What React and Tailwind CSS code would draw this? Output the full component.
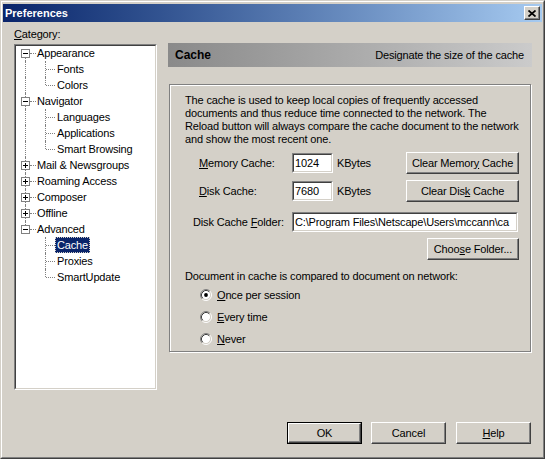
import React from "react";

const tree = [
  { label: "Appearance", open: true, children: ["Fonts", "Colors"] },
  { label: "Navigator", open: true, children: ["Languages", "Applications", "Smart Browsing"] },
  { label: "Mail & Newsgroups", open: false },
  { label: "Roaming Access", open: false },
  { label: "Composer", open: false },
  { label: "Offline", open: false },
  { label: "Advanced", open: true, children: ["Cache", "Proxies", "SmartUpdate"] },
];

function Btn({ children, className = "", def = false }) {
  const inner = (
    <div className="h-full w-full flex items-center justify-center border border-t-white border-l-white border-r-[#404040] border-b-[#404040] shadow-[inset_-1px_-1px_0_#808080]">
      {children}
    </div>
  );
  return def ? (
    <div className={"border border-black " + className}>{inner}</div>
  ) : (
    <div className={className}>{inner}</div>
  );
}

function Sunken({ className = "", innerClass = "", children }) {
  return (
    <div className={"border border-t-[#808080] border-l-[#808080] border-b-white border-r-white " + className}>
      <div className={"h-full w-full bg-white border border-t-[#404040] border-l-[#404040] border-b-[#d4d0c8] border-r-[#d4d0c8] " + innerClass}>
        {children}
      </div>
    </div>
  );
}

function Radio({ checked }) {
  return (
    <svg width="12" height="12" viewBox="0 0 12 12" className="shrink-0">
      <circle cx="6" cy="6" r="4.5" fill="white" />
      <path d="M2.11 9.89 A5.5 5.5 0 0 1 9.89 2.11" fill="none" stroke="#808080" strokeWidth="1" />
      <path d="M9.89 2.11 A5.5 5.5 0 0 1 2.11 9.89" fill="none" stroke="#ffffff" strokeWidth="1" />
      <path d="M2.82 9.18 A4.5 4.5 0 0 1 9.18 2.82" fill="none" stroke="#404040" strokeWidth="1" />
      <path d="M9.18 2.82 A4.5 4.5 0 0 1 2.82 9.18" fill="none" stroke="#d4d0c8" strokeWidth="1" />
      {checked && <circle cx="6" cy="6" r="1.9" fill="black" />}
    </svg>
  );
}

function ExpandBox({ open }) {
  return (
    <svg width="9" height="9" viewBox="0 0 9 9" className="absolute left-[5px] top-[4px]">
      <rect x="0.5" y="0.5" width="8" height="8" fill="white" stroke="#808080" />
      <line x1="2" y1="4.5" x2="7" y2="4.5" stroke="black" />
      {!open && <line x1="4.5" y1="2" x2="4.5" y2="7" stroke="black" />}
    </svg>
  );
}

function Tree() {
  const rows = [];
  tree.forEach((n, i) => {
    const first = i === 0;
    const last = i === tree.length - 1;
    rows.push({ type: 0, label: n.label, open: n.open, first, last });
    if (n.open)
      n.children.forEach((c, j) =>
        rows.push({ type: 1, label: c, parentLast: last, lastChild: j === n.children.length - 1 })
      );
  });
  const dot = "absolute border-dotted border-[#808080]";
  return (
    <div className="-mt-px">
      {rows.map((r, k) =>
        r.type === 0 ? (
          <div key={k} className="relative h-[16px] flex items-center pl-[21px] whitespace-nowrap">
            <span
              className={
                dot +
                " left-[9px] w-0 border-l " +
                (r.first ? "top-[8px] bottom-0" : r.last ? "top-0 h-[8px]" : "top-0 bottom-0")
              }
            />
            <span className={dot + " left-[14px] top-[8px] w-[6px] h-0 border-t"} />
            <ExpandBox open={r.open} />
            <span>{r.label}</span>
          </div>
        ) : (
          <div key={k} className="relative h-[16px] flex items-center pl-[39px] whitespace-nowrap">
            {!r.parentLast && <span className={dot + " left-[9px] top-0 bottom-0 w-0 border-l"} />}
            <span className={dot + " left-[29px] top-0 w-0 border-l " + (r.lastChild ? "h-[8px]" : "h-[16px]")} />
            <span className={dot + " left-[30px] top-[8px] w-[9px] h-0 border-t"} />
            <span
              className={
                "h-[16px] leading-[16px] px-[2px] " +
                (r.label === "Cache" ? "bg-[#0a246a] text-white outline outline-1 outline-dotted outline-[#d4d0c8] -outline-offset-1" : "")
              }
            >
              {r.label}
            </span>
          </div>
        )
      )}
    </div>
  );
}

export default function App() {
  return (
    <div className="w-[545px] h-[459px] bg-[#d4d0c8] text-black text-[11px] leading-[13px] tracking-[-0.15px] font-['Liberation_Sans',Arial,sans-serif] border border-t-[#d4d0c8] border-l-[#d4d0c8] border-r-[#404040] border-b-[#404040] overflow-hidden">
      <div className="h-full border border-t-white border-l-white border-r-[#808080] border-b-[#808080] flex flex-col">
        {/* Title bar */}
        <div className="mt-[2px] mx-px h-[18px] flex items-center bg-linear-to-r from-[#0a246a] to-[#a6caf0] pl-[2px] pr-[2px]">
          <span className="text-white font-bold text-[11px] tracking-normal">Preferences</span>
          <div className="ml-auto w-[16px] h-[14px]">
            <div className="h-full w-full bg-[#d4d0c8] flex items-center justify-center border border-t-white border-l-white border-r-[#404040] border-b-[#404040] shadow-[inset_-1px_-1px_0_#808080]">
              <svg width="8" height="7" viewBox="0 0 8 7">
                <path d="M0.5 0.5 L7.5 6.5 M7.5 0.5 L0.5 6.5" stroke="black" strokeWidth="1.7" />
              </svg>
            </div>
          </div>
        </div>

        {/* Main */}
        <div className="flex">
          {/* Left column */}
          <div className="ml-[12px] w-[143px] flex flex-col">
            <div className="mt-[6px] h-[13px]">
              <u>C</u>ategory:
            </div>
            <Sunken className="mt-[3px] h-[346px] w-[143px]" innerClass="overflow-hidden">
              <Tree />
            </Sunken>
          </div>

          {/* Right column */}
          <div className="ml-[11px] w-[364px] flex flex-col">
            <div className="mt-[21px] h-[24px] flex items-center justify-between pl-[7px] pr-[8px] bg-linear-to-r from-[#8a8a8a] to-[#cbcbcb]">
              <span className="font-bold text-[12px] tracking-normal">Cache</span>
              <span>Designate the size of the cache</span>
            </div>

            <div className="mt-[17px] ml-px w-[362px] h-[268px] border border-[#808080] shadow-[1px_1px_0_white,inset_1px_1px_0_white] flex flex-col pt-[9px]">
              <p className="pl-[15px] whitespace-nowrap">
                The cache is used to keep local copies of frequently accessed
                <br />
                documents and thus reduce time connected to the network. The
                <br />
                Reload button will always compare the cache document to the network
                <br />
                and show the most recent one.
              </p>

              <div className="mt-[6px] h-[22px] flex items-center">
                <div className="ml-[29px] w-[93px]">
                  <u>M</u>emory Cache:
                </div>
                <Sunken className="w-[41px] h-[20px]" innerClass="flex items-center pl-px">
                  1024
                </Sunken>
                <span className="ml-[4px]">KBytes</span>
                <Btn className="ml-auto mr-[11px] w-[113px] h-[22px]">
                  <span>
                    Clear Memor<u>y</u> Cache
                  </span>
                </Btn>
              </div>

              <div className="mt-[6px] h-[22px] flex items-center">
                <div className="ml-[29px] w-[93px]">
                  <u>D</u>isk Cache:
                </div>
                <Sunken className="w-[41px] h-[20px]" innerClass="flex items-center pl-px">
                  7680
                </Sunken>
                <span className="ml-[4px]">KBytes</span>
                <Btn className="ml-auto mr-[11px] w-[113px] h-[22px]">
                  <span>
                    Clear Dis<u>k</u> Cache
                  </span>
                </Btn>
              </div>

              <div className="mt-[9px] h-[22px] flex items-center">
                <div className="ml-[23px] w-[99px] whitespace-nowrap">
                  Disk Cache <u>F</u>older:
                </div>
                <Sunken className="w-[226px] h-[20px]" innerClass="flex items-center pl-px overflow-hidden whitespace-nowrap">
                  C:\Program Files\Netscape\Users\mccann\ca
                </Sunken>
              </div>

              <div className="mt-[5px] h-[22px] flex">
                <Btn className="ml-auto mr-[11px] w-[92px] h-[22px]">
                  <span>
                    Choo<u>s</u>e Folder...
                  </span>
                </Btn>
              </div>

              <div className="mt-[10px] pl-[15px] h-[13px]">Document in cache is compared to document on network:</div>

              <div className="mt-px flex flex-col">
                <div className="h-[22px] flex items-center pl-[30px] gap-[5px]">
                  <Radio checked />
                  <span>
                    <u>O</u>nce per session
                  </span>
                </div>
                <div className="h-[22px] flex items-center pl-[30px] gap-[5px]">
                  <Radio />
                  <span>
                    <u>E</u>very time
                  </span>
                </div>
                <div className="h-[22px] flex items-center pl-[30px] gap-[5px]">
                  <Radio />
                  <span>
                    <u>N</u>ever
                  </span>
                </div>
              </div>
            </div>
          </div>
        </div>

        {/* Buttons */}
        <div className="mt-[32px] flex justify-end pr-[12px]">
          <Btn def className="w-[75px] h-[22px]">
            OK
          </Btn>
          <Btn className="ml-[9px] w-[75px] h-[22px]">Cancel</Btn>
          <Btn className="ml-[10px] w-[75px] h-[22px]">
            <span>
              <u>H</u>elp
            </span>
          </Btn>
        </div>
      </div>
    </div>
  );
}
